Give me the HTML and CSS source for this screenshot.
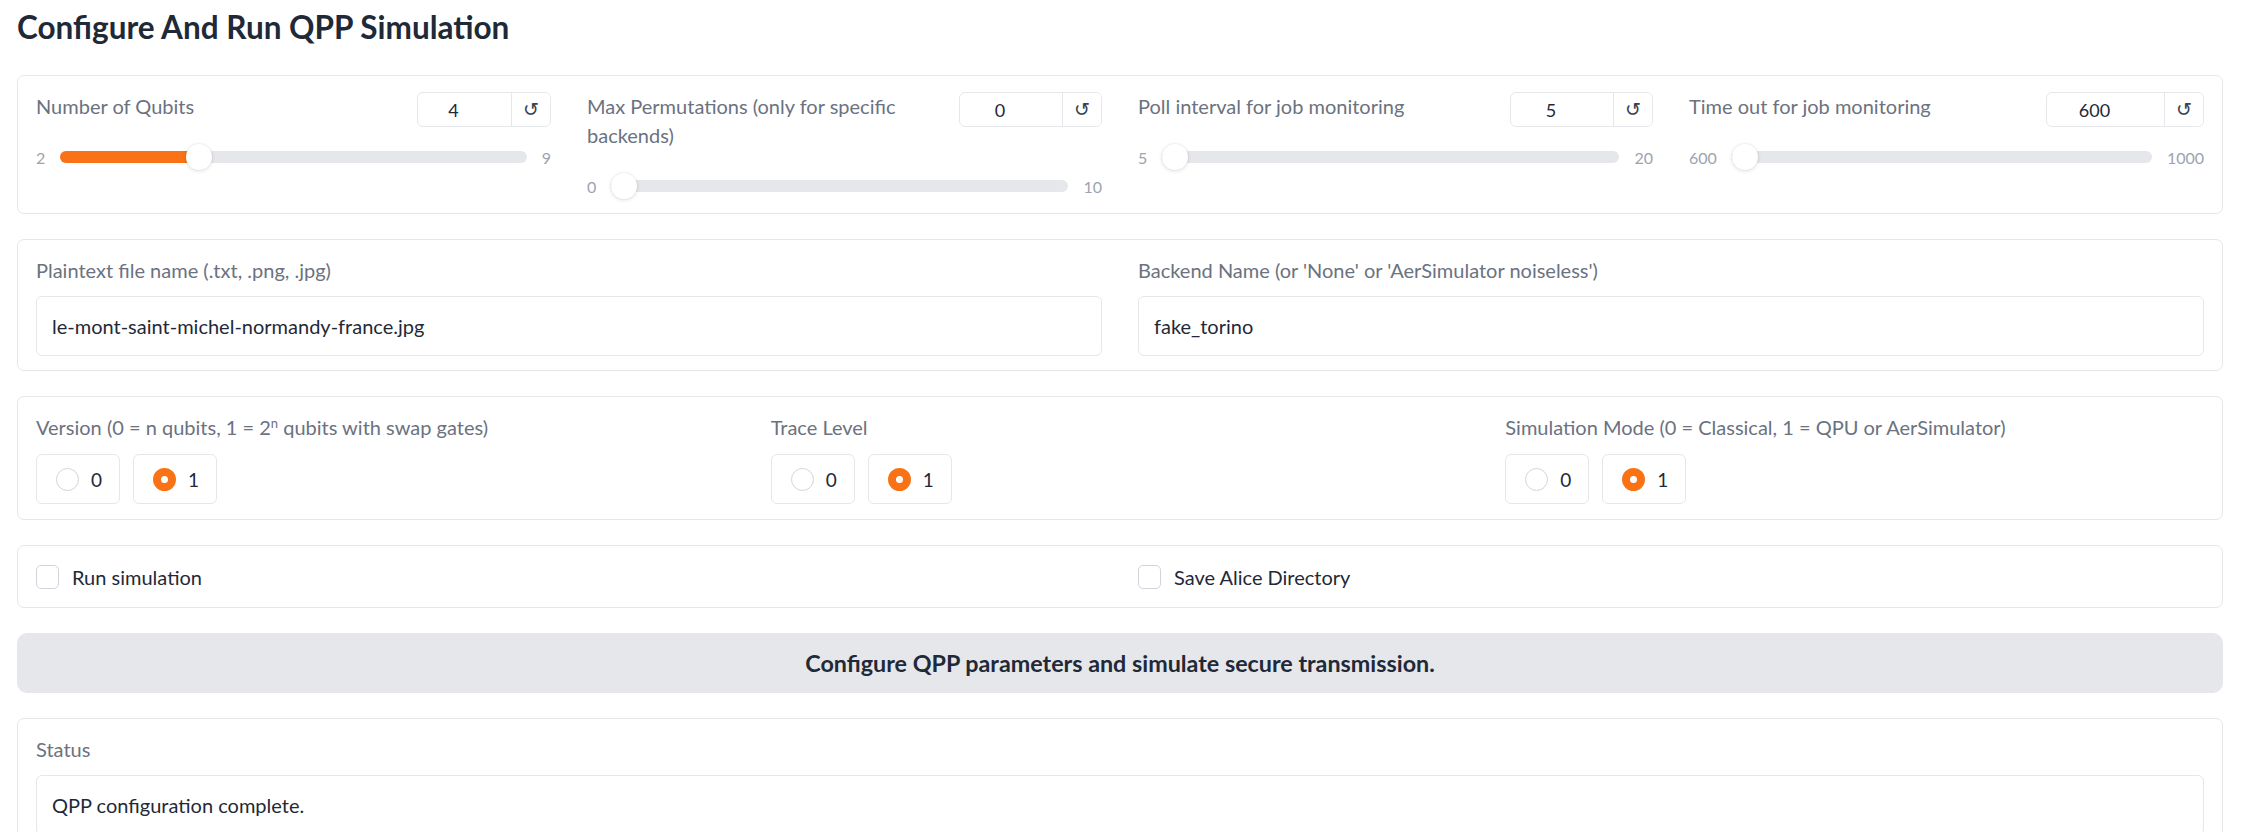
FILE: index.html
```html
<!DOCTYPE html>
<html lang="en">
<head>
<meta charset="utf-8">
<title>Configure And Run QPP Simulation</title>
<link rel="stylesheet" href="styles.css">
</head>
<body>
<div class="app">
  <h2 class="title">Configure And Run QPP Simulation</h2>

  <div class="panel cols4">
    <div class="field">
      <div class="head">
        <span class="label">Number of Qubits</span>
        <div class="num w1"><input class="num-input" type="text" value="4"><button class="reset">↺</button></div>
      </div>
      <div class="slider">
        <span class="mm">2</span>
        <div class="track" style="--f:0.2857"><div class="fill"></div><div class="thumb"></div></div>
        <span class="mm">9</span>
      </div>
    </div>
    <div class="field">
      <div class="head">
        <span class="label">Max Permutations (only for specific backends)</span>
        <div class="num w2"><input class="num-input" type="text" value="0"><button class="reset">↺</button></div>
      </div>
      <div class="slider">
        <span class="mm">0</span>
        <div class="track" style="--f:0"><div class="fill"></div><div class="thumb"></div></div>
        <span class="mm">10</span>
      </div>
    </div>
    <div class="field">
      <div class="head">
        <span class="label">Poll interval for job monitoring</span>
        <div class="num w2"><input class="num-input" type="text" value="5"><button class="reset">↺</button></div>
      </div>
      <div class="slider">
        <span class="mm">5</span>
        <div class="track" style="--f:0"><div class="fill"></div><div class="thumb"></div></div>
        <span class="mm">20</span>
      </div>
    </div>
    <div class="field">
      <div class="head">
        <span class="label">Time out for job monitoring</span>
        <div class="num w4"><input class="num-input" type="text" value="600"><button class="reset">↺</button></div>
      </div>
      <div class="slider">
        <span class="mm">600</span>
        <div class="track" style="--f:0"><div class="fill"></div><div class="thumb"></div></div>
        <span class="mm">1000</span>
      </div>
    </div>
  </div>

  <div class="panel cols2">
    <div class="field">
      <span class="label tb">Plaintext file name (.txt, .png, .jpg)</span>
      <input class="text-input" type="text" value="le-mont-saint-michel-normandy-france.jpg">
    </div>
    <div class="field">
      <span class="label tb">Backend Name (or 'None' or 'AerSimulator noiseless')</span>
      <input class="text-input" type="text" value="fake_torino">
    </div>
  </div>

  <div class="panel cols3">
    <div class="field">
      <span class="label rb">Version (0 = n qubits, 1 = 2<sup>n</sup> qubits with swap gates)</span>
      <div class="radios">
        <label class="radio"><span class="dot"></span><span>0</span></label>
        <label class="radio"><span class="dot on"></span><span>1</span></label>
      </div>
    </div>
    <div class="field">
      <span class="label rb">Trace Level</span>
      <div class="radios">
        <label class="radio"><span class="dot"></span><span>0</span></label>
        <label class="radio"><span class="dot on"></span><span>1</span></label>
      </div>
    </div>
    <div class="field">
      <span class="label rb">Simulation Mode (0 = Classical, 1 = QPU or AerSimulator)</span>
      <div class="radios">
        <label class="radio"><span class="dot"></span><span>0</span></label>
        <label class="radio"><span class="dot on"></span><span>1</span></label>
      </div>
    </div>
  </div>

  <div class="panel cols2">
    <div class="field chk">
      <label class="check"><span class="box"></span><span>Run simulation</span></label>
    </div>
    <div class="field chk">
      <label class="check"><span class="box"></span><span>Save Alice Directory</span></label>
    </div>
  </div>

  <button class="primary">Configure QPP parameters and simulate secure transmission.</button>

  <div class="panel">
    <div class="field">
      <span class="label tb">Status</span>
      <input class="text-input" type="text" value="QPP configuration complete.">
    </div>
  </div>
</div>
</body>
</html>
```

FILE: styles.css
```css
* { box-sizing: border-box; }
html, body { margin: 0; padding: 0; background: #ffffff; }
body {
  font-family: Lato, "Liberation Sans", sans-serif;
  color: #1f2937;
  overflow: hidden;
}
.app {
  padding: 8px 21px 0 17px;
  display: flex;
  flex-direction: column;
  gap: 25px;
}
.title {
  margin: 0 0 4px 0;
  font-size: 31.5px;
  line-height: 38px;
  font-weight: 700;
  color: #1f2937;
}
.panel {
  border: 1px solid #e5e7eb;
  border-radius: 7px;
  background: #fff;
  display: grid;
}
.cols4 { grid-template-columns: repeat(4, 1fr); }
.cols3 { grid-template-columns: repeat(3, 1fr); }
.cols2 { grid-template-columns: repeat(2, 1fr); }
.field {
  padding: 16px 18px 14px 18px;
  min-width: 0;
}
.cols3 .field { padding-bottom: 15px; }
.field.chk { padding-bottom: 16px; }
.label {
  display: block;
  font-size: 20px;
  line-height: 29px;
  color: #6b7280;
}
.label sup { font-size: 13px; line-height: 0; vertical-align: 7px; }
.head {
  display: flex;
  justify-content: space-between;
  align-items: flex-start;
  gap: 14px;
}
.head .label { padding-bottom: 23px; }
.num {
  flex: none;
  display: flex;
  height: 35px;
  border: 1px solid #e5e7eb;
  border-radius: 6px;
  overflow: hidden;
}
.w1 { width: 134px; }
.w2 { width: 143px; }
.w4 { width: 158px; }
.num-input {
  flex: 1;
  min-width: 0;
  border: 0;
  outline: none;
  font: inherit;
  font-size: 18px;
  color: #1f2937;
  text-align: center;
  padding: 0 24px 0 2px;
  background: transparent;
}
.reset {
  flex: none;
  width: 39px;
  border: 0;
  border-left: 1px solid #e5e7eb;
  background: #fff;
  font-family: "DejaVu Sans", sans-serif;
  font-size: 19px;
  line-height: 1;
  color: #374151;
  padding: 0;
}
.slider {
  display: flex;
  align-items: center;
  gap: 15px;
  height: 26px;
}
.mm {
  font-size: 16px;
  color: #9ca3af;
}
.track {
  flex: 1;
  position: relative;
  height: 12px;
  border-radius: 6px;
  background: #e5e7eb;
}
.fill {
  position: absolute;
  left: 0; top: 0; bottom: 0;
  width: calc(13px + var(--f) * (100% - 26px));
  background: #f97316;
  border-radius: 6px;
}
.thumb {
  position: absolute;
  top: 50%;
  left: calc(var(--f) * (100% - 26px));
  width: 26px;
  height: 26px;
  margin-top: -13px;
  border-radius: 50%;
  background: #fff;
  box-shadow: 0 1px 4px rgba(0, 0, 0, 0.12), 0 0 0 1px rgba(0, 0, 0, 0.03);
}
.label.tb { margin-bottom: 11px; }
.label.rb { margin-bottom: 12px; }
.text-input {
  display: block;
  width: 100%;
  height: 60px;
  border: 1px solid #e5e7eb;
  border-radius: 6px;
  padding: 0 15px;
  font: inherit;
  font-size: 20px;
  color: #1f2937;
  outline: none;
  background: #fff;
}
.radios {
  display: flex;
  gap: 13px;
}
.radio {
  display: flex;
  align-items: center;
  gap: 12px;
  height: 50px;
  padding: 0 17px 0 19px;
  border: 1px solid #e5e7eb;
  border-radius: 6px;
  font-size: 19px;
  color: #1f2937;
}
.dot {
  width: 23px;
  height: 23px;
  border-radius: 50%;
  border: 1px solid #d1d5db;
  background: #fff;
}
.dot.on {
  border: 8px solid #f97316;
}
.check {
  display: flex;
  align-items: center;
  gap: 13px;
  height: 29px;
  font-size: 20px;
  color: #1f2937;
}
.box {
  width: 23px;
  height: 24px;
  border: 1px solid #d1d5db;
  border-radius: 5px;
  background: #fff;
}
.primary {
  height: 60px;
  border: 0;
  border-radius: 10px;
  background: #e5e7eb;
  font-family: inherit;
  font-size: 23.3px;
  font-weight: 700;
  color: #1f2937;
  padding: 0;
}
```
